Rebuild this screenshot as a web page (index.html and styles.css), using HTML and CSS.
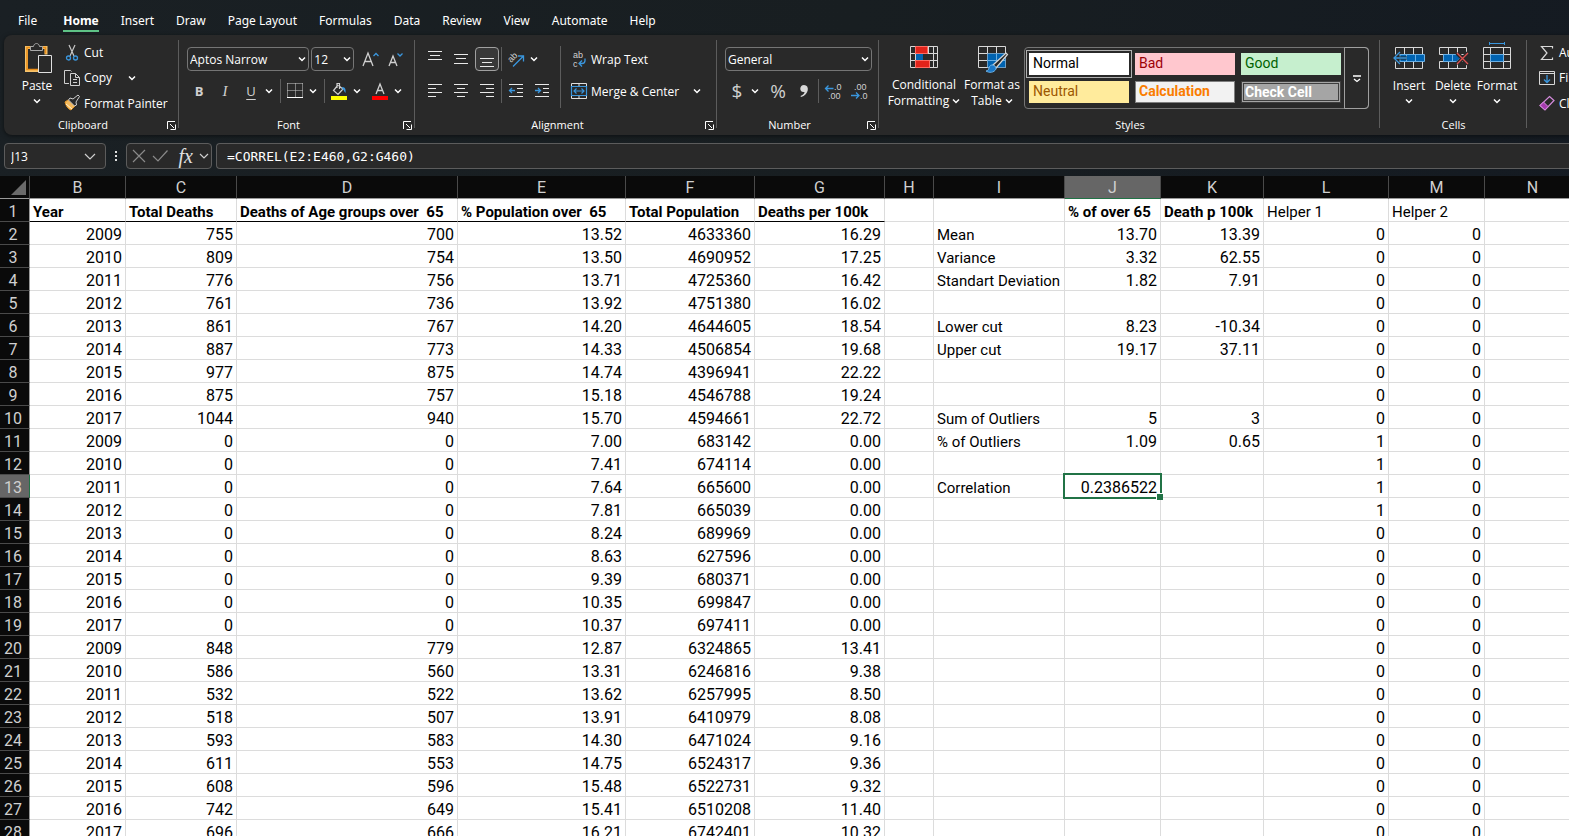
FILE: index.html
```html
<!DOCTYPE html>
<html lang="en">
<head>
    <meta charset="UTF-8">
    <meta name="viewport" content="width=device-width, initial-scale=1.0">
    <title>Workbook</title>
    <link rel="stylesheet" href="styles.css">
</head>
<body>
    <svg class="defs" aria-hidden="true">
        <symbol id="chev" viewBox="0 0 8 8"><path d="M1 2.5 4 5.5 7 2.5" fill="none" stroke="currentColor" stroke-width="1.5"/></symbol>
        <symbol id="launch" viewBox="0 0 9 9"><path d="M.5 8V.5H8M3 3l4 4M8.500 3.500v5h-5" fill="none" stroke="currentColor"/></symbol>
    </svg>

    <nav class="tabs">
        <a href="#" class="file">File</a>
        <a href="#" class="active">Home</a>
        <a href="#">Insert</a>
        <a href="#">Draw</a>
        <a href="#">Page Layout</a>
        <a href="#">Formulas</a>
        <a href="#">Data</a>
        <a href="#">Review</a>
        <a href="#">View</a>
        <a href="#">Automate</a>
        <a href="#">Help</a>
    </nav>

    <div class="ribbon">
        <section class="group clipboard">
            <div class="tools">
                <button class="big paste">
                    <svg width="32" height="31" viewBox="-4 0 32 31"><path d="M6.500 4.500h-5v23h12M16 4.500h5v7" fill="none" stroke="#f7c36b" stroke-width="3"/><path d="M6 4.500H2v22h11M17 4.500h3.500v6" fill="none" stroke="#ea8d17" stroke-width="1.500"/><path d="M5.500 7.500v-4h3c.5-4 5.500-4 6 0h3v4z" fill="#292929" stroke="#a8a8a8"/><path d="M13.500 12.500h13v17h-13z" fill="#292929" stroke="#e0e0e0"/></svg>
                    <span>Paste</span>
                    <svg class="chev"><use href="#chev"/></svg>
                </button>
                <div class="stack">
                    <button class="small"><svg width="16" height="16" viewBox="0 0 16 16"><path d="M5 0l5 11M11 0 6 11" fill="none" stroke="#c8c8c8" stroke-width="1.200"/><circle cx="4.500" cy="13" r="2" fill="none" stroke="#3a96dd" stroke-width="1.300"/><circle cx="11.500" cy="13" r="2" fill="none" stroke="#3a96dd" stroke-width="1.300"/></svg>Cut</button>
                    <button class="small"><svg width="16" height="16" viewBox="0 0 16 16"><path d="M5 13.500H.5V.5h6l1 1M6.500 3.500h5l4 4v8h-9zM11.500 3.500v4h4M9 9.500h4M9 12.500h4" fill="none" stroke="#d0d0d0"/></svg>Copy<svg class="chev copy-chev"><use href="#chev"/></svg></button>
                    <button class="small"><svg width="16" height="16" viewBox="0 0 16 16"><path d="M1 7l3-2 7 6-4 4c-3-1-5-4-6-8z" fill="#f3b95d" stroke="#e79a2c"/><path d="M2 9l6 5" stroke="#fff0d0"/><path d="M4.500 5 6 3l3 1 5-4 1.500 1.500L12 7l.5 3-2 1z" fill="#292929" stroke="#d0d0d0"/></svg>Format Painter</button>
                </div>
            </div>
            <footer>Clipboard<button class="launch" aria-label="Clipboard settings"><svg><use href="#launch"/></svg></button></footer>
        </section>

        <section class="group font">
            <div class="tools rows">
                <div class="row">
                    <div class="combo family"><select aria-label="Font"><option>Aptos Narrow</option></select><svg class="chev"><use href="#chev"/></svg></div>
                    <div class="combo size"><select aria-label="Font size"><option>12</option></select><svg class="chev"><use href="#chev"/></svg></div>
                    <button class="icon grow" aria-label="Increase font size"><svg width="18" height="16" viewBox="0 0 18 16"><path d="M1 15 6 2l5 13M3 10.500h6" fill="none" stroke="#d0d0d0" stroke-width="1.300"/><path d="M11.500 5 14 2.500 16.500 5" fill="none" stroke="#3a96dd" stroke-width="1.300"/></svg></button>
                    <button class="icon" aria-label="Decrease font size"><svg width="18" height="16" viewBox="0 0 18 16"><path d="M2 15 6 5l4 10M3.500 11.500h5" fill="none" stroke="#d0d0d0" stroke-width="1.300"/><path d="M10.500 2.500 13 5l2.500-2.500" fill="none" stroke="#3a96dd" stroke-width="1.300"/></svg></button>
                </div>
                <div class="row">
                    <button class="icon bold">B</button>
                    <button class="icon italic">I</button>
                    <button class="icon underline">U</button><button class="drop" aria-label="Underline options"><svg class="chev"><use href="#chev"/></svg></button>
                    <i class="sep"></i>
                    <button class="icon" aria-label="Borders"><svg width="16" height="16" viewBox="0 0 16 16"><path d="M.5.500v13M15.500.5v13M8.500.5v13M.5.500h15M.5 7.500h15" fill="none" stroke="#d0d0d0" stroke-dasharray="1 1"/><path d="M0 14.500h16" stroke="#fff"/></svg></button><button class="drop" aria-label="Border options"><svg class="chev"><use href="#chev"/></svg></button>
                    <i class="sep"></i>
                    <button class="icon" aria-label="Fill colour"><svg width="16" height="17" viewBox="0 0 16 17"><path d="M7 2 2.500 7.500l4.500 4 5-5.500-4.500-3.500M6 5V.500h2.500V6" fill="none" stroke="#d0d0d0" stroke-width="1.200"/><path d="M11 4c3 0 4 2 3.500 6-1.500-1-1-3-3-4z" fill="#3a96dd"/><path d="M0 13h16v4H0z" fill="#ff0"/></svg></button><button class="drop" aria-label="Fill options"><svg class="chev"><use href="#chev"/></svg></button>
                    <button class="icon color" aria-label="Font colour"><svg width="16" height="17" viewBox="0 0 16 17"><path d="M4 11 8 1l4 10M5.500 7.500h5" fill="none" stroke="#d0d0d0" stroke-width="1.300"/><path d="M0 13h16v4H0z" fill="#f00"/></svg></button><button class="drop" aria-label="Font colour options"><svg class="chev"><use href="#chev"/></svg></button>
                </div>
            </div>
            <footer>Font<button class="launch" aria-label="Font settings"><svg><use href="#launch"/></svg></button></footer>
        </section>

        <section class="group alignment">
            <div class="tools">
                <div class="rows">
                    <div class="row">
                        <button class="icon" aria-label="Top align"><svg width="14" height="16" viewBox="0 0 14 16"><path d="M0 .5h14M2 4.500h10M0 8.500h14" stroke="#e8e8e8"/></svg></button>
                        <button class="icon" aria-label="Middle align"><svg width="14" height="16" viewBox="0 0 14 16"><path d="M0 3.500h14M2 7.500h10M0 12.500h14" stroke="#e8e8e8"/></svg></button>
                        <button class="icon on" aria-label="Bottom align"><svg width="14" height="16" viewBox="0 0 14 16"><path d="M0 7.500h14M2 11.500h10M0 15.500h14" stroke="#e8e8e8"/></svg></button>
                        <i class="sep tight"></i>
                        <button class="icon" aria-label="Orientation"><svg width="18" height="16" viewBox="0 0 18 16"><text class="glyph" transform="translate(4 12) rotate(-45)">ab</text><path d="M6 15.500 16 5.500M11 5h5.500v5.500" fill="none" stroke="#3a96dd" stroke-width="1.300"/></svg></button><button class="drop" aria-label="Orientation options"><svg class="chev"><use href="#chev"/></svg></button>
                    </div>
                    <div class="row">
                        <button class="icon" aria-label="Align left"><svg width="14" height="16" viewBox="0 0 14 16"><path d="M0 1.500h14M0 5.500h8M0 9.500h14M0 13.500h8" stroke="#e8e8e8"/></svg></button>
                        <button class="icon" aria-label="Centre"><svg width="14" height="16" viewBox="0 0 14 16"><path d="M0 1.500h14M3 5.500h8M0 9.500h14M3 13.500h8" stroke="#e8e8e8"/></svg></button>
                        <button class="icon" aria-label="Align right"><svg width="14" height="16" viewBox="0 0 14 16"><path d="M0 1.500h14M6 5.500h8M0 9.500h14M6 13.500h8" stroke="#e8e8e8"/></svg></button>
                        <i class="sep tight"></i>
                        <button class="icon" aria-label="Decrease indent"><svg width="16" height="16" viewBox="0 0 16 16"><path d="M1 1.500h14M9 5.500h6M9 9.500h6M1 13.500h14" stroke="#e8e8e8"/><path d="M7 7.500H1.500M4 5 1.500 7.500 4 10" fill="none" stroke="#3a96dd" stroke-width="1.300"/></svg></button>
                        <button class="icon" aria-label="Increase indent"><svg width="16" height="16" viewBox="0 0 16 16"><path d="M1 1.500h14M9 5.500h6M9 9.500h6M1 13.500h14" stroke="#e8e8e8"/><path d="M1 7.500h5.500M4 5l2.500 2.500L4 10" fill="none" stroke="#3a96dd" stroke-width="1.300"/></svg></button>
                    </div>
                </div>
                <i class="sep tall"></i>
                <div class="rows wraps">
                    <button class="small"><svg width="16" height="17" viewBox="0 0 16 17"><text class="glyph" x="2" y="7">ab</text><text class="glyph" x="2" y="16">c</text><path d="M14 7.500v2c0 2-1 3-3 3H8.500M11 9.500l-3 3 3 3" fill="none" stroke="#3a96dd" stroke-width="1.300"/></svg>Wrap Text</button>
                    <button class="small"><svg width="16" height="16" viewBox="0 0 16 16"><path d="M.5 3V.5h15V3M8 .5V3M.5 12.500v3h15v-3M8 12.500v3" fill="none" stroke="#e0e0e0"/><path d="M.5 3.500h15v9H.5zM3 8h10M5.500 5.500 3 8l2.500 2.500M10.500 5.500 13 8l-2.500 2.500" fill="none" stroke="#3a96dd" stroke-width="1.200"/></svg>Merge &amp; Center<svg class="chev merge-chev"><use href="#chev"/></svg></button>
                </div>
            </div>
            <footer>Alignment<button class="launch" aria-label="Alignment settings"><svg><use href="#launch"/></svg></button></footer>
        </section>

        <section class="group number">
            <div class="tools rows">
                <div class="row">
                    <div class="combo format"><select aria-label="Number format"><option>General</option></select><svg class="chev"><use href="#chev"/></svg></div>
                </div>
                <div class="row">
                    <button class="icon sign">$</button><button class="drop" aria-label="Currency options"><svg class="chev"><use href="#chev"/></svg></button>
                    <button class="icon sign percent">%</button>
                    <button class="icon" aria-label="Comma style"><svg width="10" height="14" viewBox="0 0 10 14"><path d="M5 1c6 0 5 10-3 12l-.5-1c3-1 4-3 4-4C0 9 0 1 5 1z" fill="#d8d8d8"/></svg></button>
                    <i class="sep tight"></i>
                    <button class="icon" aria-label="Increase decimal"><svg width="16" height="17" viewBox="0 0 16 17"><text class="digits" x="9" y="7">.0</text><text class="digits" x="3" y="16">.00</text><path d="M8.500 5.500h-8M3.500 2.500l-3 3 3 3" fill="none" stroke="#3a96dd" stroke-width="1.300"/></svg></button>
                    <button class="icon" aria-label="Decrease decimal"><svg width="16" height="17" viewBox="0 0 16 17"><text class="digits" x="3" y="7">.00</text><text class="digits" x="9" y="16">.0</text><path d="M0 12.500h8M5 9.500l3 3-3 3" fill="none" stroke="#3a96dd" stroke-width="1.300"/></svg></button>
                </div>
            </div>
            <footer>Number<button class="launch" aria-label="Number settings"><svg><use href="#launch"/></svg></button></footer>
        </section>

        <section class="group styles">
            <div class="tools">
                <button class="big cond">
                    <svg width="28" height="23" viewBox="0 0 28 23"><path d="M.5.500h27v21H.5zM5.500.500v21M18.500.500v21M23.500.500v21M.5 7.500h27M.5 14.500h27" fill="none" stroke="#d8d8d8"/><path d="M5.500.500h12v7h-12zM5.500 14.500h14v7h-14z" fill="#e2231a" stroke="#ff6b62"/><path d="M6 8h7v6H6z" fill="#0063b1"/><path d="M13.500 8h9v6h-9z" fill="#292929"/></svg>
                    <span>Conditional<br>Formatting <svg class="chev"><use href="#chev"/></svg></span>
                </button>
                <button class="big as-table">
                    <svg width="28" height="23" viewBox="0 0 28 23"><path d="M.5.500h27v21H.5zM9.500.500v21M18.500.500v21M.5 7.500h27M.5 14.500h27" fill="none" stroke="#d8d8d8"/><path d="M9.500 7.500h18v14h-18z" fill="#0063b1"/><path d="M18.500 7.500v14M9.500 14.500h18" stroke="#69afe5"/><path d="M15 19 28 7l1.500 1.500L18 22z" fill="#292929" stroke="#d8d8d8" stroke-width="1.200"/><path d="M8 25c4 0 2-6 6-6 3 0 4 2 4 4-2 4-7 4-10 2z" fill="#1a78c8" stroke="#69afe5"/></svg>
                    <span>Format as<br>Table <svg class="chev"><use href="#chev"/></svg></span>
                </button>
                <div class="gallery">
                    <div class="swatches">
                        <button class="normal">Normal</button>
                        <button class="bad">Bad</button>
                        <button class="good">Good</button>
                        <button class="neutral">Neutral</button>
                        <button class="calculation">Calculation</button>
                        <button class="check">Check Cell</button>
                    </div>
                    <button class="more" aria-label="More styles"><svg width="8" height="8" viewBox="0 0 8 8"><path d="M0 1h8M1 4l3 2.500L7 4" fill="none" stroke="#fff" stroke-width="1.300"/></svg></button>
                </div>
            </div>
            <footer>Styles</footer>
        </section>

        <section class="group cells">
            <div class="tools">
                <button class="big">
                    <svg width="32" height="23" viewBox="0 0 32 23"><path d="M2.500.500h27v21h-27zM11.500.500v21M20.500.500v21M2.500 7.500h27M2.500 14.500h27" fill="none" stroke="#d8d8d8"/><path d="M7 7.500h24.500v7H7z" fill="#0063b1" stroke="#69afe5"/><path d="M13.500 7.500v7M22.500 7.500v7" stroke="#69afe5"/><path d="M1 11h13M7 5l-6 6 6 6" fill="none" stroke="#292929" stroke-width="3"/><path d="M1 11h13M7 5l-6 6 6 6" fill="none" stroke="#3a96dd" stroke-width="1.300"/></svg>
                    <span>Insert</span>
                    <svg class="chev"><use href="#chev"/></svg>
                </button>
                <button class="big">
                    <svg width="32" height="23" viewBox="0 0 32 23"><path d="M2.500 7.500v-7h27v7M2.500 14.500v7h27v-7M11.500.500v21M20.500.500v21M2.500 7.500h27M2.500 14.500h27" fill="none" stroke="#d8d8d8"/><path d="M6.500 7.500H20l3 3.500-3 3.500H6.500z" fill="#0063b1" stroke="#69afe5"/><path d="M15.500 7.500v7" stroke="#69afe5"/><path d="M20 6l11 11M31 6 20 17" stroke="#292929" stroke-width="4"/><path d="M20 6l11 11M31 6 20 17" stroke="#e05252" stroke-width="1.300"/></svg>
                    <span>Delete</span>
                    <svg class="chev"><use href="#chev"/></svg>
                </button>
                <button class="big">
                    <svg width="32" height="28" viewBox="0 0 32 28"><path d="M2.500 5.500h27v21h-27zM9.500 5.500v21M22.500 5.500v21M2.500 12.500h27M2.500 19.500h27" fill="none" stroke="#d8d8d8"/><path d="M9.500 12.500h13v7h-13z" fill="#0063b1" stroke="#69afe5"/><path d="M8.500 0v3M23.500 0v3M8 1.500h16" stroke="#3a96dd"/></svg>
                    <span>Format</span>
                    <svg class="chev"><use href="#chev"/></svg>
                </button>
            </div>
            <footer>Cells</footer>
        </section>

        <section class="group editing">
            <div class="tools">
                <div class="stack">
                    <button class="small"><svg width="16" height="16" viewBox="0 0 16 16"><path d="M13.500 3.500v-2H2.500L8 8l-5.500 6.500h11v-2" fill="none" stroke="#d8d8d8" stroke-width="1.200"/></svg>AutoSum</button>
                    <button class="small"><svg width="16" height="16" viewBox="0 0 16 16"><path d="M.5 1.500h15v13H.5zM.5 3.500h15" fill="none" stroke="#d8d8d8"/><path d="M8 5v7.500M5 9.500l3 3 3-3" fill="none" stroke="#3a96dd" stroke-width="1.300"/></svg>Fill</button>
                    <button class="small"><svg width="16" height="16" viewBox="0 0 16 16"><path d="M10.500 1.500l4.500 4-9 9.500-5-4.500z" fill="none" stroke="#d58bdc" stroke-width="1.200"/><path d="M4.500 7l4.500 4.500L6 15l-5-4.500z" fill="#a63bb0" stroke="#d58bdc"/></svg>Clear</button>
                </div>
            </div>
        </section>
    </div>

    <div class="formula-bar">
        <div class="name-box"><input type="text" value="J13" aria-label="Name box"><svg width="12" height="12" viewBox="0 0 12 12"><path d="M1 4l5 5 5-5" fill="none" stroke="#d0d0d0" stroke-width="1.200"/></svg></div>
        <svg width="4" height="12" viewBox="0 0 4 12"><path d="M1 1h2v2H1zM1 5h2v2H1zM1 9h2v2H1z" fill="#e0e0e0"/></svg>
        <div class="fx-box">
            <button aria-label="Cancel"><svg width="14" height="14" viewBox="0 0 14 14"><path d="M1 1l12 12M13 1 1 13" stroke="#8a8a8a" stroke-width="1.200"/></svg></button>
            <button aria-label="Enter"><svg width="16" height="14" viewBox="0 0 16 14"><path d="M1 7l5 5L15.500 1.500" fill="none" stroke="#8a8a8a" stroke-width="1.200"/></svg></button>
            <button class="fx">fx</button>
            <svg width="10" height="10" viewBox="0 0 10 10"><path d="M1 3l4 4 4-4" fill="none" stroke="#d0d0d0" stroke-width="1.200"/></svg>
        </div>
        <input class="formula" type="text" value="=CORREL(E2:E460,G2:G460)" aria-label="Formula">
    </div>

    <div class="sheet">
        <table>
            <colgroup>
                <col class="w-row"><col class="w-b"><col class="w-c"><col class="w-d"><col class="w-e"><col class="w-f"><col class="w-g"><col class="w-h"><col class="w-i"><col class="w-j"><col class="w-k"><col class="w-l"><col class="w-m"><col class="w-n">
            </colgroup>
            <thead id="letters"></thead>
            <tbody id="cells"></tbody>
        </table>
    </div>
    <script src="sheet.js"></script>
</body>
</html>
```
FILE: styles.css
```css
* {
    box-sizing: border-box;
}
body {
    margin: 0;
    height: 100vh;
    display: flex;
    flex-direction: column;
    overflow: hidden;
    background: linear-gradient(100deg, #1a2024, #181e21 50%, #141a22);
    color: #fff;
    font: 12px "Open Sans", sans-serif;
}
button, select, input {
    font: inherit;
    color: inherit;
    background: none;
    border: 0;
    padding: 0;
    margin: 0;
}
svg {
    flex: none;
    overflow: visible;
}
.defs {
    position: absolute;
    width: 0;
    height: 0;
}
.chev {
    width: 8px;
    height: 8px;
}

/* tabs */
.tabs {
    display: flex;
    flex: none;
    gap: 22px;
    height: 35px;
    padding: 9px 18px 0;
    font-family: "Noto Sans", sans-serif;
}
.tabs a {
    height: 23px;
    line-height: 23px;
    color: #fff;
    text-decoration: none;
    white-space: nowrap;
}
.tabs .file {
    margin-right: 4px;
}
.tabs .active {
    font-weight: bold;
    border-bottom: 2px solid #5fc487;
}

/* ribbon */
.ribbon {
    display: flex;
    flex: none;
    height: 100px;
    margin-left: 4px;
    padding: 5px 0 2px;
    background: #292929;
    border-radius: 8px 0 0 8px;
    box-shadow: 0 1px 4px rgba(0, 0, 0, 0.5);
}
.group {
    display: flex;
    flex-direction: column;
    flex: none;
    position: relative;
    padding: 0 7px 0 8px;
}
.group::after {
    content: "";
    position: absolute;
    right: 0;
    top: 0;
    height: 88px;
    border-right: 1px solid #5c5c5c;
}
.clipboard { width: 175px; }
.font { width: 236px; }
.alignment { width: 302px; }
.number { width: 162px; }
.styles { width: 501px; }
.cells { width: 147px; }
.editing { width: 170px; }
.tools {
    display: flex;
    height: 77px;
}
.group footer {
    display: flex;
    justify-content: center;
    height: 16px;
    line-height: 16px;
    padding-right: 18px;
    font-size: 11px;
}
.styles footer, .cells footer {
    padding-right: 0;
}
.launch {
    position: absolute;
    right: 3px;
    bottom: 3px;
    width: 9px;
    height: 9px;
    line-height: 0;
}
.launch svg {
    width: 9px;
    height: 9px;
}
.rows {
    display: flex;
    flex-direction: column;
    gap: 8px;
    padding-top: 7px;
}
.row {
    display: flex;
    gap: 2px;
    height: 24px;
}
.icon {
    display: flex;
    align-items: center;
    justify-content: center;
    width: 24px;
    height: 24px;
    color: #d0d0d0;
}
.icon.on {
    border: 1px solid #a0a0a0;
    border-radius: 4px;
    background: #383838;
}
.drop {
    display: flex;
    align-items: center;
    justify-content: center;
    width: 12px;
    margin-left: -2px;
}
.sep {
    width: 1px;
    height: 24px;
    margin-left: 3px;
    background: #5c5c5c;
}
.sep.tight {
    margin-left: 0;
}
.sep.tall {
    height: 62px;
    margin: 6px 10px 0 6px;
}
.color, .grow {
    margin-left: 3px;
}
.percent {
    margin-left: 3px;
}
.bold {
    font-size: 13px;
    font-weight: bold;
}
.italic {
    font: italic 15px "Liberation Serif", serif;
}
.underline {
    font-size: 13px;
    text-decoration: underline;
    text-underline-offset: 3px;
}
.sign {
    font: 19px "Open Sans", sans-serif;
}
.glyph {
    font: 9px "Liberation Sans", sans-serif;
    fill: #d0d0d0;
}
.digits {
    font: 9px "Liberation Sans", sans-serif;
    fill: #d0d0d0;
}
.combo {
    position: relative;
}
.combo select {
    appearance: none;
    width: 100%;
    height: 24px;
    padding: 0 2px;
    border: 1px solid #757575;
    border-radius: 4px;
    background: #292929;
}
.combo .chev {
    position: absolute;
    right: 3px;
    top: 8px;
    pointer-events: none;
}
.family { width: 124px; }
.size { width: 43px; }
.format { width: 147px; }

.big {
    display: flex;
    flex-direction: column;
    align-items: center;
    justify-content: flex-end;
    width: 44px;
    height: 65px;
    line-height: 16px;
    white-space: nowrap;
}
.big .chev {
    margin-top: 3px;
}
.big span .chev {
    margin: 0;
}
.big span {
    margin-top: 8px;
}
.paste {
    margin-left: 3px;
}
.big.paste span {
    margin-top: 4px;
}
.stack {
    display: flex;
    flex-direction: column;
    height: 76px;
    margin-left: 5px;
}
.small {
    display: flex;
    align-items: center;
    height: 26px;
    gap: 4px;
    white-space: nowrap;
}
.stack .small {
    height: 25px;
    flex: 1;
}
.copy-chev {
    margin-left: 12px;
}
.merge-chev {
    margin-left: 10px;
}
.wraps {
    gap: 6px;
    padding-top: 6px;
}

.big.cond, .big.as-table {
    height: 69px;
}
.cond {
    width: 72px;
    margin-left: 1px;
}
.as-table {
    width: 64px;
}
.gallery {
    display: flex;
    width: 345px;
    height: 62px;
    margin-top: 7px;
    border: 1px solid #757575;
    border-radius: 4px;
}
.swatches {
    display: grid;
    grid-template-columns: repeat(3, 100px);
    grid-auto-rows: 22px;
    gap: 6px;
    padding: 5px 4px;
}
.swatches button {
    padding: 0 4px 2px;
    text-align: left;
    font: 14px/20px Roboto, sans-serif;
}
.swatches .normal {
    background: #fff;
    color: #000;
    outline: 1px solid #b0b0b0;
    outline-offset: 2px;
}
.swatches .bad {
    background: #ffc7ce;
    color: #9c0006;
}
.swatches .good {
    background: #c6efce;
    color: #006100;
}
.swatches .neutral {
    background: #ffeb9c;
    color: #9c5700;
}
.swatches .calculation {
    background: #f2f2f2;
    border: 1px solid #7f7f7f;
    color: #fa7d00;
    font-weight: bold;
    line-height: 18px;
    padding: 0 3px 2px;
}
.swatches .check {
    background: #a5a5a5;
    border: 3px double #3f3f3f;
    outline: 1px solid #a5a5a5;
    outline-offset: -2px;
    font-weight: bold;
    line-height: 16px;
    padding: 0 1px;
}
.more {
    flex: 1;
    margin: -1px;
    border: 1px solid #a0a0a0;
    border-radius: 0 4px 4px 0;
}
.cells {
    padding-left: 7px;
}
.editing {
    padding-left: 7px;
}

/* formula bar */
.formula-bar {
    display: flex;
    flex: none;
    align-items: center;
    height: 26px;
    margin: 8px 0 7px 4px;
}
.name-box, .fx-box, .formula {
    display: flex;
    align-items: center;
    height: 26px;
    border: 1px solid #5c5c5c;
    border-radius: 4px;
    background: #292929;
}
.name-box {
    width: 102px;
    padding: 0 9px 0 6px;
    margin-right: 8px;
}
.name-box input {
    flex: 1;
    min-width: 0;
}
.fx-box {
    width: 86px;
    margin: 0 4px 0 8px;
    padding: 0 2px 0 5px;
    justify-content: space-between;
}
.fx-box button {
    display: flex;
}
.fx-box .fx {
    margin-left: 4px;
    font: italic 20px/20px "Liberation Serif", serif;
    color: #e0e0e0;
}
.formula {
    flex: 1;
    min-width: 0;
    padding: 0 10px;
    border-right: 0;
    border-radius: 4px 0 0 4px;
    font: 13px "DejaVu Sans Mono", monospace;
}

/* sheet */
.sheet {
    flex: 1;
    min-height: 0;
    overflow: hidden;
    background: #fff;
}
table {
    width: 1581px;
    table-layout: fixed;
    border-collapse: separate;
    border-spacing: 0;
    color: #000;
    font: 16px Roboto, sans-serif;
}
.w-row { width: 30px; }
.w-b, .w-j, .w-m, .w-n { width: 96px; }
.w-c { width: 111px; }
.w-d { width: 221px; }
.w-e { width: 168px; }
.w-f { width: 129px; }
.w-g { width: 130px; }
.w-h { width: 49px; }
.w-i { width: 131px; }
.w-k { width: 103px; }
.w-l { width: 125px; }
th, td {
    height: 23px;
    padding: 4px 3px 0;
    line-height: 18px;
    white-space: pre;
    border-right: 1px solid #dcdcdc;
    border-bottom: 1px solid #dcdcdc;
}
th {
    background: #0a0a0a;
    color: #d0d0d0;
    font-weight: normal;
    border-color: #4a4a4a;
}
thead th {
    padding-top: 2px;
    line-height: 20px;
    border-bottom-color: #999;
}
tbody th {
    padding-right: 6px;
    border-right-color: #999;
}
thead .current {
    background: #666;
    border-bottom-color: #217346;
}
tbody .current {
    background: #666;
    border-right-color: #217346;
}
thead .corner {
    padding: 0 3px 3px 0;
    text-align: right;
    vertical-align: bottom;
    line-height: 0;
}
td {
    text-align: right;
}
.text {
    text-align: left;
    font-size: 15px;
}
.head {
    font-weight: bold;
}
.ruled {
    border-bottom-color: #000;
}
.selected {
    position: relative;
}
.selected::before {
    content: "";
    position: absolute;
    inset: -2px;
    border: 2px solid #217346;
}
.selected::after {
    content: "";
    position: absolute;
    right: -3px;
    bottom: -3px;
    width: 6px;
    height: 6px;
    background: #217346;
    border: solid #fff;
    border-width: 1px 0 0 1px;
}
```
FILE: sheet.js
```js
const letters = ['B', 'C', 'D', 'E', 'F', 'G', 'H', 'I', 'J', 'K', 'L', 'M', 'N'];

// columns B to G
const data = [
    ['Year', 'Total Deaths', 'Deaths of Age groups over  65', '% Population over  65', 'Total Population', 'Deaths per 100k'],
    [2009, 755, 700, '13.52', 4633360, '16.29'],
    [2010, 809, 754, '13.50', 4690952, '17.25'],
    [2011, 776, 756, '13.71', 4725360, '16.42'],
    [2012, 761, 736, '13.92', 4751380, '16.02'],
    [2013, 861, 767, '14.20', 4644605, '18.54'],
    [2014, 887, 773, '14.33', 4506854, '19.68'],
    [2015, 977, 875, '14.74', 4396941, '22.22'],
    [2016, 875, 757, '15.18', 4546788, '19.24'],
    [2017, 1044, 940, '15.70', 4594661, '22.72'],
    [2009, 0, 0, '7.00', 683142, '0.00'],
    [2010, 0, 0, '7.41', 674114, '0.00'],
    [2011, 0, 0, '7.64', 665600, '0.00'],
    [2012, 0, 0, '7.81', 665039, '0.00'],
    [2013, 0, 0, '8.24', 689969, '0.00'],
    [2014, 0, 0, '8.63', 627596, '0.00'],
    [2015, 0, 0, '9.39', 680371, '0.00'],
    [2016, 0, 0, '10.35', 699847, '0.00'],
    [2017, 0, 0, '10.37', 697411, '0.00'],
    [2009, 848, 779, '12.87', 6324865, '13.41'],
    [2010, 586, 560, '13.31', 6246816, '9.38'],
    [2011, 532, 522, '13.62', 6257995, '8.50'],
    [2012, 518, 507, '13.91', 6410979, '8.08'],
    [2013, 593, 583, '14.30', 6471024, '9.16'],
    [2014, 611, 553, '14.75', 6524317, '9.36'],
    [2015, 608, 596, '15.48', 6522731, '9.32'],
    [2016, 742, 649, '15.41', 6510208, '11.40'],
    [2017, 696, 666, '16.21', 6742401, '10.32']
];

// columns I to K, by row number
const stats = {
    1: ['', '% of over 65', 'Death p 100k'],
    2: ['Mean', '13.70', '13.39'],
    3: ['Variance', '3.32', '62.55'],
    4: ['Standart Deviation', '1.82', '7.91'],
    6: ['Lower cut', '8.23', '-10.34'],
    7: ['Upper cut', '19.17', '37.11'],
    10: ['Sum of Outliers', '5', '3'],
    11: ['% of Outliers', '1.09', '0.65'],
    13: ['Correlation', '0.2386522', '']
};

document.getElementById('letters').innerHTML =
    '<tr><th class="corner"><svg width="15" height="15"><path d="M15 0v15H0z" fill="#6a6a6a"/></svg></th>' +
    letters.map(l => `<th class="${l === 'J' ? 'current' : ''}">${l}</th>`).join('') + '</tr>';

document.getElementById('cells').innerHTML = data.map((values, i) => {
    const row = i + 1;
    const helper1 = row === 1 ? 'Helper 1' : (row >= 11 && row <= 14 ? 1 : 0);
    const helper2 = row === 1 ? 'Helper 2' : 0;
    const all = [...values, '', ...(stats[row] || ['', '', '']), helper1, helper2, ''];
    const tds = all.map((value, c) => {
        const names = [];
        if (row === 1 || letters[c] === 'I') names.push('text');
        if (row === 1 && c < 10) names.push('head');
        if (row === 1 && c < 6) names.push('ruled');
        if (row === 13 && letters[c] === 'J') names.push('selected');
        return `<td class="${names.join(' ')}">${value}</td>`;
    });
    return `<tr><th class="${row === 13 ? 'current' : ''}">${row}</th>${tds.join('')}</tr>`;
}).join('');
```
